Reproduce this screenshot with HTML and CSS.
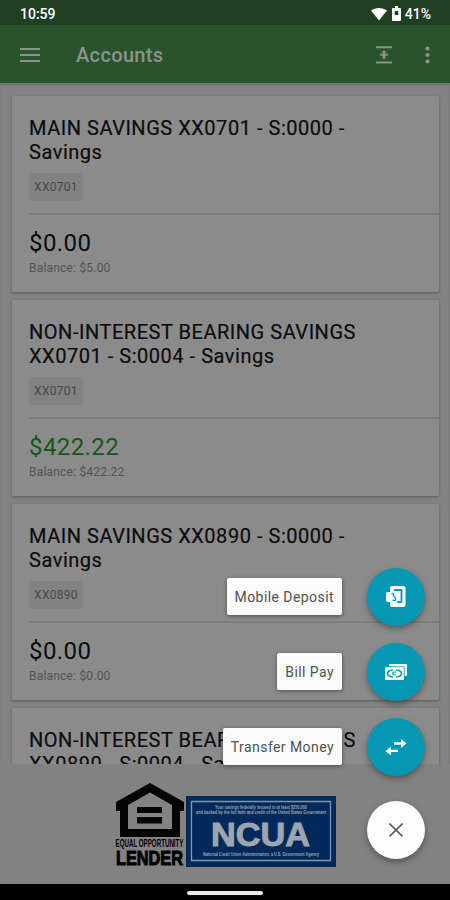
FILE: index.html
```html
<!DOCTYPE html>
<html lang="en">
<head>
  <meta charset="UTF-8">
  <meta name="viewport" content="width=device-width, initial-scale=1.0">
  <title>Accounts</title>
  <link rel="stylesheet" href="styles.css">
</head>
<body>
  <div class="screen">
    <div class="status-bar">
      <span class="clock">10:59</span>
      <div class="status-icons">
        <svg width="16" height="14" viewBox="0 0 16 14"><path d="M0 3.600C4.500 0 11.500 0 16 3.600L8 13.500z" fill="#fff"/></svg>
        <svg class="battery" width="9" height="15" viewBox="0 0 9 15"><path d="M3 0h3v2h2q1 0 1 1v11q0 1-1 1H1q-1 0-1-1V3q0-1 1-1h2z" fill="#fff"/><path d="M2.700 5h3.600v4H2.700z" fill="#213f22"/></svg>
        <span class="percent">41%</span>
      </div>
    </div>

    <div class="toolbar">
      <svg width="20" height="14" viewBox="0 0 20 14"><path d="M0 1h20M0 7h20M0 13h20" stroke="#8b938b" stroke-width="1.800"/></svg>
      <h1>Accounts</h1>
      <svg class="collapse" width="16" height="18" viewBox="0 0 16 18"><path d="M0 1.200h16M0 16.500h16M4 8.800h8" stroke="#8b938b" stroke-width="1.900"/><path d="M8 4l2.600 2.800H9v4h1.600L8 13.600l-2.600-2.800H7v-4H5.400z" fill="#8b938b"/></svg>
      <svg width="5" height="18" viewBox="0 0 5 18" fill="#8b938b"><circle cx="2.500" cy="2.500" r="2.100"/><circle cx="2.500" cy="9" r="2.100"/><circle cx="2.500" cy="15.500" r="2.100"/></svg>
    </div>

    <div class="accounts">
      <div class="card">
        <h2>MAIN SAVINGS XX0701 - S:0000 -<br>Savings</h2>
        <span class="tag">XX0701</span>
        <div class="amounts">
          <p class="available">$0.00</p>
          <p class="balance">Balance: $5.00</p>
        </div>
      </div>
      <div class="card">
        <h2>NON-INTEREST BEARING SAVINGS<br>XX0701 - S:0004 - Savings</h2>
        <span class="tag">XX0701</span>
        <div class="amounts">
          <p class="available positive">$422.22</p>
          <p class="balance">Balance: $422.22</p>
        </div>
      </div>
      <div class="card">
        <h2>MAIN SAVINGS XX0890 - S:0000 -<br>Savings</h2>
        <span class="tag">XX0890</span>
        <div class="amounts">
          <p class="available">$0.00</p>
          <p class="balance">Balance: $0.00</p>
        </div>
      </div>
      <div class="card">
        <h2>NON-INTEREST BEARING SAVINGS<br>XX0890 - S:0004 - Savings</h2>
      </div>
    </div>

    <div class="footer">
      <svg class="lender" width="70" height="86" viewBox="0 0 70 86">
        <path d="M35 0L69 19v9h-4v26H5V28H1v-9z" fill="#050505"/>
        <path d="M35 9.500L57 22v24H13V22z" fill="#828282"/>
        <path d="M22 24h25v6H22zM22 34h25v6.500H22z" fill="#050505"/>
        <text x="0.500" y="63.500" textLength="68" lengthAdjust="spacingAndGlyphs" class="equal">EQUAL OPPORTUNITY</text>
        <text x="1" y="82" textLength="67" lengthAdjust="spacingAndGlyphs" class="lender-text">LENDER</text>
      </svg>
      <svg class="ncua" width="150" height="71" viewBox="0 0 150 71">
        <path d="M0 0h150v71H0z" fill="#02295b"/>
        <path d="M5.500 5.500h139v59H5.500z" fill="none" stroke="#8296ad" stroke-width="1.300"/>
        <g fill="#9ca5b0">
          <text x="29" y="12.800" textLength="92" lengthAdjust="spacingAndGlyphs" class="fine">Your savings federally insured to at least $250,000</text>
          <text x="10" y="18" textLength="130" lengthAdjust="spacingAndGlyphs" class="fine">and backed by the full faith and credit of the United States Government</text>
          <text x="25" y="50" textLength="99" lengthAdjust="spacingAndGlyphs" class="ncua-text">NCUA</text>
          <text x="17" y="60" textLength="116" lengthAdjust="spacingAndGlyphs" class="fine">National Credit Union Administration, a U.S. Government Agency</text>
        </g>
      </svg>
    </div>

    <div class="nav-bar"><div class="nav-handle"></div></div>

    <div class="speed-dial">
      <div class="action">
        <span class="label">Mobile Deposit</span>
        <button class="fab">
          <svg width="20" height="22" viewBox="0 0 20 22"><path d="M6 0h11.500q2 0 2 2v17q0 2-2 2H6q-2 0-2-2v-3H2q-2 0-2-2V8q0-2 2-2h2V2q0-2 2-2z" fill="#fff"/><path d="M8 4h7.500v12H12" fill="none" stroke="#0697b3" stroke-width="1.800"/><path d="M11 15l1 3 1-3z" fill="#0697b3"/><path d="M5.500 7.800h2v2.500l2 1.500v2.500h-3" fill="none" stroke="#0697b3" stroke-width="1.200"/></svg>
        </button>
      </div>
      <div class="action">
        <span class="label">Bill Pay</span>
        <button class="fab">
          <svg width="22" height="17" viewBox="0 0 22 17"><path d="M5 0h16q1 0 1 1v10q0 1-1 1H5q-1 0-1-1V1q0-1 1-1z" fill="#fff"/><path d="M0 4q0-1 1-1h17q1 0 1 1v11q0 1-1 1H1q-1 0-1-1z" fill="#fff"/><path d="M3.500 2.700h15.700v9.800" fill="none" stroke="#0697b3" stroke-width=".8"/><path d="M8 6Q2.500 6.500 2.500 9.500T8 13M11 6q5.500.5 5.500 3.500T11 13" fill="none" stroke="#0697b3" stroke-width="1.500"/><path d="M10.800 8.200q-3-.8-3 1.300t3 1.300" fill="none" stroke="#0697b3" stroke-width="1.200"/></svg>
        </button>
      </div>
      <div class="action">
        <span class="label">Transfer Money</span>
        <button class="fab">
          <svg width="22" height="17" viewBox="0 0 22 17"><path d="M9 3.300h7V0l5.500 4.500L16 9V5.700H9zM13 10.700H6V7.500L.5 12 6 16.500v-3.400h7z" fill="#fff"/></svg>
        </button>
      </div>
      <button class="fab close">
        <svg width="14" height="14" viewBox="0 0 14 14"><path d="M.5.500l13 13M13.500.500l-13 13" stroke="#5c5c5c" stroke-width="1.600"/></svg>
      </button>
    </div>
  </div>
</body>
</html>
```
FILE: styles.css
```css
* {
  box-sizing: border-box;
}

body {
  margin: 0;
  font-family: Roboto, "Liberation Sans", sans-serif;
  background-color: #828282;
}

h1, h2, p {
  margin: 0;
}

svg {
  display: block;
  flex: none;
}

.screen {
  position: relative;
  display: flex;
  flex-direction: column;
  width: 450px;
  height: 900px;
  overflow: hidden;
}

.status-bar {
  flex: none;
  display: flex;
  justify-content: space-between;
  align-items: center;
  height: 25px;
  padding: 2px 19px 0 20px;
  background-color: #213f22;
  color: #fff;
  font-size: 14px;
  font-weight: 500;
}

.status-icons {
  display: flex;
  align-items: center;
}

.battery {
  margin: 0 4px 0 5px;
}

.toolbar {
  flex: none;
  display: flex;
  align-items: center;
  height: 58px;
  padding: 2px 20px 0;
  background-color: #28532b;
  color: #8b938b;
}

.toolbar h1 {
  margin-left: 36px;
  font-size: 20px;
  font-weight: 500;
  letter-spacing: 0.35px;
}

.collapse {
  margin-left: auto;
  margin-right: 33px;
}

.accounts {
  flex: none;
  height: 681px;
  padding: 13px 11px 0 12px;
  overflow: hidden;
  box-shadow: inset 0 2px 2px rgba(0, 0, 0, 0.12);
}

.card {
  height: 196px;
  margin-bottom: 8px;
  padding: 20px 0 0 17px;
  border-radius: 2px;
  background-color: #8b8b8b;
  box-shadow: 0 1px 3px rgba(0, 0, 0, 0.3);
}

.card h2 {
  height: 57px;
  color: #0c0c0c;
  font-size: 20px;
  font-weight: 400;
  line-height: 24px;
  letter-spacing: 0.53px;
  white-space: nowrap;
  -webkit-text-stroke: 0.2px #0c0c0c;
}

.tag {
  display: block;
  width: 54px;
  height: 28px;
  border-radius: 2px;
  background-color: #828282;
  color: #484848;
  font-size: 12px;
  line-height: 29px;
  text-align: center;
  letter-spacing: 0.3px;
}

.amounts {
  margin-top: 12px;
  padding-top: 14px;
  border-top: 2px solid #7d7d7d;
}

.available {
  color: #0c0c0c;
  font-size: 24px;
  line-height: 28px;
  letter-spacing: 0.4px;
}

.positive {
  color: #15581a;
}

.balance {
  margin-top: 4px;
  color: #545454;
  font-size: 12px;
  line-height: 14px;
  letter-spacing: 0.2px;
}

.footer {
  flex: none;
  display: flex;
  height: 120px;
  padding: 19px 0 0 115px;
}

.ncua {
  margin: 13px 0 0 1px;
}

.equal {
  font: bold 10px "Liberation Sans", sans-serif;
}

.lender-text {
  font: bold 20px "Liberation Sans", sans-serif;
  stroke: #000;
  stroke-width: 1px;
}

.ncua-text {
  font: bold 34px "Liberation Sans", sans-serif;
  stroke: #9ca5b0;
  stroke-width: 1px;
}

.fine {
  font: bold 4.500px "Liberation Sans", sans-serif;
}

.nav-bar {
  flex: none;
  display: flex;
  justify-content: center;
  height: 16px;
  padding-top: 7px;
  background-color: #000;
}

.nav-handle {
  width: 76px;
  height: 4px;
  border-radius: 2px;
  background-color: #e8e8e8;
}

/* floating menu over the list */
.speed-dial {
  position: absolute;
  right: 25px;
  bottom: 41px;
  display: flex;
  flex-direction: column;
  align-items: flex-end;
  gap: 17px;
}

.action {
  display: flex;
  align-items: center;
  gap: 25px;
}

.label {
  height: 37px;
  margin-bottom: 1px;
  padding: 0 8px;
  border-radius: 2px;
  background-color: #fbfbfb;
  box-shadow: 0 1px 4px rgba(0, 0, 0, 0.45);
  color: #505050;
  font-size: 14px;
  line-height: 38px;
  letter-spacing: 0.43px;
}

.fab {
  display: flex;
  justify-content: center;
  align-items: center;
  width: 58px;
  height: 58px;
  padding: 0;
  border: none;
  border-radius: 50%;
  background-color: #0697b3;
  box-shadow: 0 3px 6px rgba(0, 0, 0, 0.35);
}

.close {
  margin-top: 8px;
  background-color: #fdfdfd;
}
```
